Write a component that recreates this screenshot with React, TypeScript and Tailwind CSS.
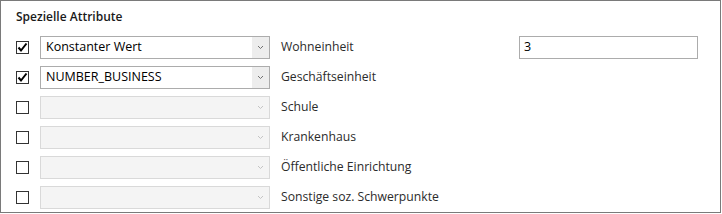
import React from 'react'

interface Row {
  checked: boolean
  value: string
  label: string
  extra?: string
}

const rows: Row[] = [
  { checked: true, value: 'Konstanter Wert', label: 'Wohneinheit', extra: '3' },
  { checked: true, value: 'NUMBER_BUSINESS', label: 'Geschäftseinheit' },
  { checked: false, value: '', label: 'Schule' },
  { checked: false, value: '', label: 'Krankenhaus' },
  { checked: false, value: '', label: 'Öffentliche Einrichtung' },
  { checked: false, value: '', label: 'Sonstige soz. Schwerpunkte' },
]

function Check({ checked }: { checked: boolean }) {
  return (
    <div className="w-[13px] h-[13px] border border-[#333333] bg-white flex items-center justify-center shrink-0">
      {checked && (
        <svg width="11" height="11" viewBox="0 0 11 11">
          <path d="M1.5 5.5 L4 8.5 L9.5 1.5" fill="none" stroke="#000" strokeWidth="2" />
        </svg>
      )}
    </div>
  )
}

function Combo({ value, enabled }: { value: string; enabled: boolean }) {
  return (
    <div
      className={
        enabled
          ? 'w-[230px] h-[23px] border border-[#acacac] bg-white flex items-stretch'
          : 'w-[230px] h-[23px] border border-[#d9d9d9] bg-[#f4f4f4] flex items-stretch'
      }
    >
      <div className="flex-1 pl-[5px] flex items-center text-[12.5px] text-[#000000] leading-none">{value}</div>
      <div
        className={
          enabled
            ? 'w-[17px] bg-[#ededed] flex items-center justify-center'
            : 'w-[17px] bg-[#f4f4f4] flex items-center justify-center'
        }
      >
        <svg width="7" height="5" viewBox="0 0 7 5">
          <path d="M1 1 L3.5 3.5 L6 1" fill="none" stroke={enabled ? '#707070' : '#c4c4c4'} strokeWidth="1" />
        </svg>
      </div>
    </div>
  )
}

export default function App() {
  return (
    <div
      className="w-[721px] h-[213px] border border-[#7a7a7a] bg-white"
      style={{ fontFamily: '"Segoe UI", "Open Sans", sans-serif' }}
    >
      <div className="pl-[15px] pt-[8px] text-[12px] font-semibold text-[#1a1a1a] leading-[16px]">Spezielle Attribute</div>
      <div className="flex flex-col gap-[7px] mt-[11px]">
        {rows.map((r, i) => (
          <div key={i} className="flex items-center h-[23px]">
            <div className="w-[39px] pl-[15px] flex items-center">
              <Check checked={r.checked} />
            </div>
            <Combo value={r.value} enabled={r.checked} />
            <div className="ml-[11px] w-[238px] text-[12.2px] text-[#2b2b2b]">{r.label}</div>
            {r.extra && (
              <div className="w-[179px] h-[23px] border border-[#acacac] bg-white flex items-center pl-[4px] text-[12.5px] text-black">
                {r.extra}
              </div>
            )}
          </div>
        ))}
      </div>
    </div>
  )
}
